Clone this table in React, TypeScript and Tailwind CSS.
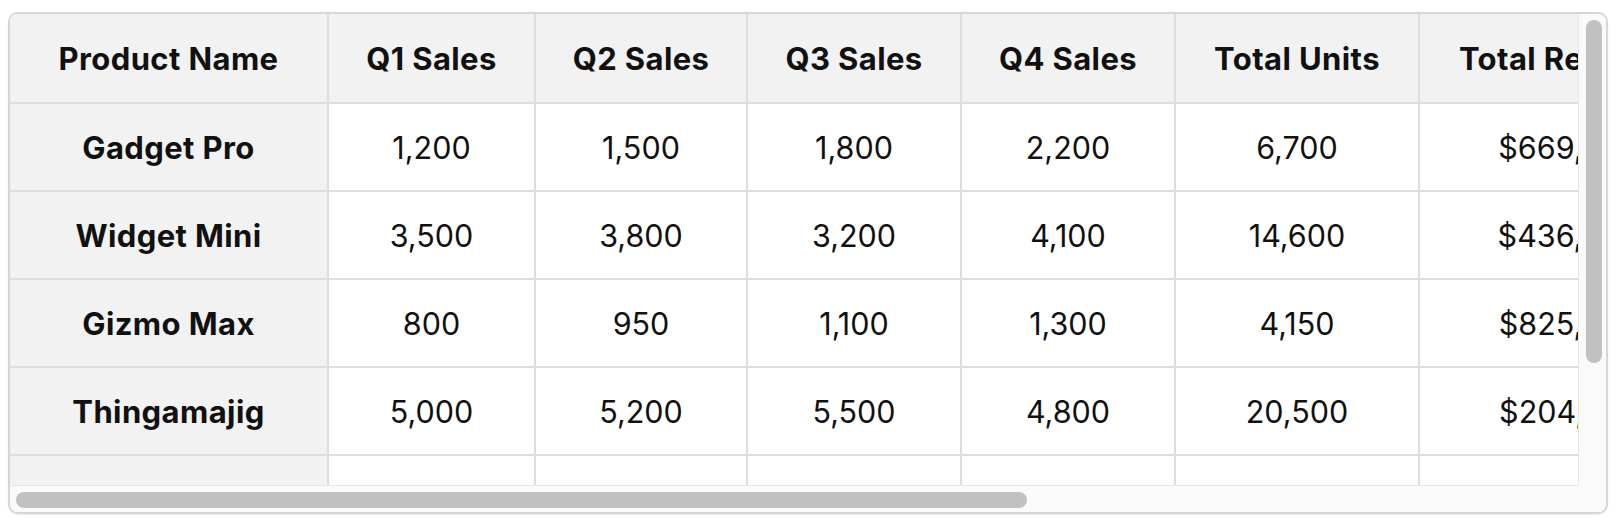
const columns = [
  { label: "Product Name", width: "w-[319px]" },
  { label: "Q1 Sales", width: "w-[207px]" },
  { label: "Q2 Sales", width: "w-[212px]" },
  { label: "Q3 Sales", width: "w-[214px]" },
  { label: "Q4 Sales", width: "w-[214px]" },
  { label: "Total Units", width: "w-[244px]" },
  { label: "Total Revenue", width: "w-[299px]" },
  { label: "Avg. Price", width: "w-[220px]" },
  { label: "Category", width: "w-[220px]" },
];

const rows = [
  ["Gadget Pro", "1,200", "1,500", "1,800", "2,200", "6,700", "$669,330", "$99.90", "Electronics"],
  ["Widget Mini", "3,500", "3,800", "3,200", "4,100", "14,600", "$436,540", "$29.90", "Accessories"],
  ["Gizmo Max", "800", "950", "1,100", "1,300", "4,150", "$825,850", "$199.00", "Electronics"],
  ["Thingamajig", "5,000", "5,200", "5,500", "4,800", "20,500", "$204,795", "$9.99", "Home"],
  ["", "", "", "", "", "", "", "", ""],
];

function Cell({
  width,
  head,
  bold,
  tall,
  children,
}: {
  width: string;
  head?: boolean;
  bold?: boolean;
  tall?: boolean;
  children?: React.ReactNode;
}) {
  return (
    <div
      className={`${width} ${tall ? "h-[90px] pt-[3px]" : "h-[88px] pt-[2px]"} shrink-0 flex items-center justify-center border-r-2 border-b-2 border-[#dedede] ${
        head || bold ? "bg-[#f2f2f2] font-bold text-[31px] tracking-[0.4px]" : "bg-white text-[30.5px]"
      } whitespace-nowrap`}
    >
      {children}
    </div>
  );
}

export default function App() {
  return (
    <div className="bg-white h-[532px] pt-[12px] pl-[8px] font-['Inter','Liberation_Sans',sans-serif] text-[#111]">
      <div className="w-[1600px] h-[502px] rounded-[10px] border-2 border-[#d6d6d6] bg-[#fafafa] overflow-hidden flex flex-col shadow-[0_1px_2px_rgba(0,0,0,0.08)]">
        <div className="flex h-[471px]">
          {/* table viewport */}
          <div className="w-[1568px] h-[471px] overflow-hidden bg-white">
            <div className="w-max">
              <div className="flex">
                {columns.map((c) => (
                  <Cell key={c.label} width={c.width} head tall>
                    {c.label}
                  </Cell>
                ))}
              </div>
              {rows.map((r, i) => (
                <div key={i} className="flex">
                  {r.map((v, j) => (
                    <Cell key={j} width={columns[j].width} bold={j === 0}>
                      {v}
                    </Cell>
                  ))}
                </div>
              ))}
            </div>
          </div>
          {/* vertical scrollbar */}
          <div className="w-[28px] border-l border-[#e6e6e6] bg-[#fafafa] pl-[7px] pt-[6px]">
            <div className="w-[16px] h-[343px] rounded-full bg-[#c1c1c1]" />
          </div>
        </div>
        {/* horizontal scrollbar */}
        <div className="flex flex-1">
          <div className="w-[1568px] border-t border-[#e6e6e6] bg-[#fafafa] pl-[6px] pt-[6px]">
            <div className="w-[1011px] h-[16px] rounded-full bg-[#c1c1c1]" />
          </div>
          <div className="flex-1 bg-[#fafafa]" />
        </div>
      </div>
    </div>
  );
}
